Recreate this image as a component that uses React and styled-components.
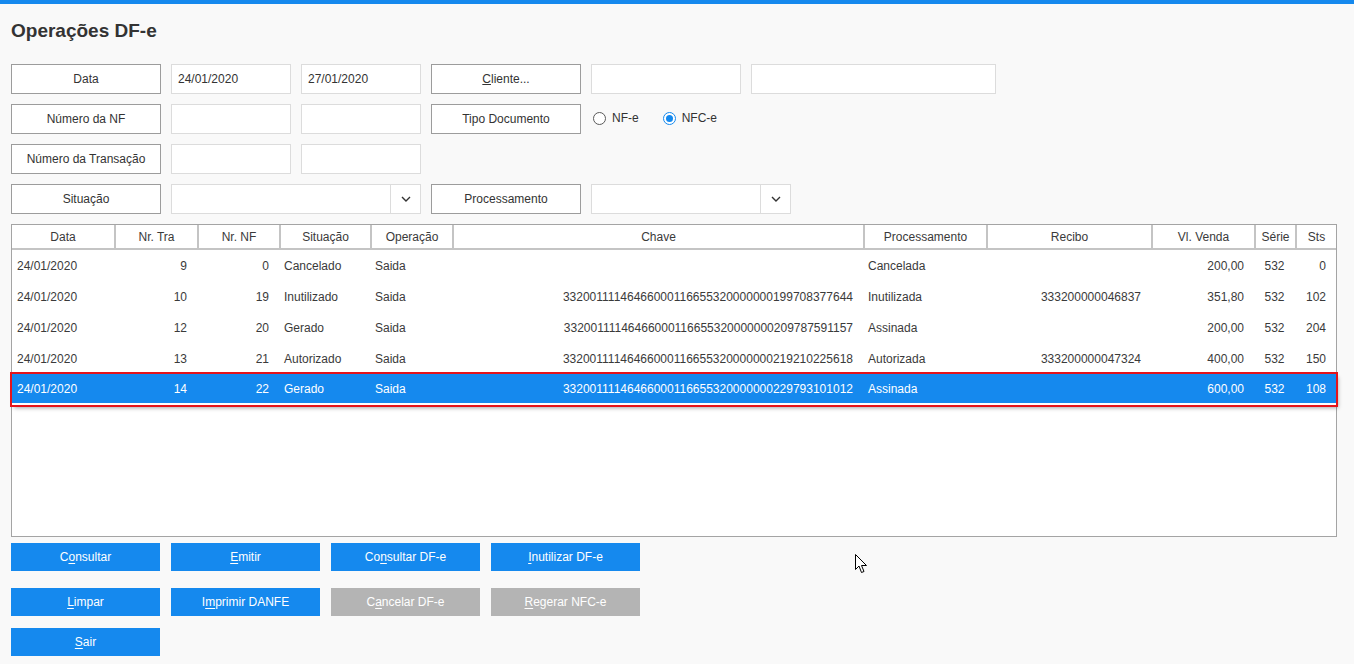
import styled, { createGlobalStyle } from "styled-components";

const GlobalStyle = createGlobalStyle`
  html, body {
    margin: 0;
    padding: 0;
    background: #f9f9f9;
  }
  body {
    font-family: "Liberation Sans", Arial, sans-serif;
    font-size: 12px;
    color: #3a3a3a;
  }
  * { box-sizing: border-box; }
`;

const BLUE = "#1589ee";

// widths of the body columns; the header separators sit 2px to the right
const columns = [
  { key: "data", title: "Data", width: 102, align: "left" },
  { key: "tra", title: "Nr. Tra", width: 83, align: "right" },
  { key: "nf", title: "Nr. NF", width: 82, align: "right" },
  { key: "sit", title: "Situação", width: 91, align: "left" },
  { key: "op", title: "Operação", width: 82, align: "left" },
  { key: "chave", title: "Chave", width: 411, align: "right" },
  { key: "proc", title: "Processamento", width: 123, align: "left" },
  { key: "recibo", title: "Recibo", width: 165, align: "right" },
  { key: "valor", title: "Vl. Venda", width: 103, align: "right" },
  { key: "serie", title: "Série", width: 41, align: "center" },
  { key: "sts", title: "Sts", width: 41, align: "right" },
];

const rows = [
  { data: "24/01/2020", tra: "9", nf: "0", sit: "Cancelado", op: "Saida", chave: "", proc: "Cancelada", recibo: "", valor: "200,00", serie: "532", sts: "0" },
  { data: "24/01/2020", tra: "10", nf: "19", sit: "Inutilizado", op: "Saida", chave: "33200111146466000116655320000000199708377644", proc: "Inutilizada", recibo: "333200000046837", valor: "351,80", serie: "532", sts: "102" },
  { data: "24/01/2020", tra: "12", nf: "20", sit: "Gerado", op: "Saida", chave: "33200111146466000116655320000000209787591157", proc: "Assinada", recibo: "", valor: "200,00", serie: "532", sts: "204" },
  { data: "24/01/2020", tra: "13", nf: "21", sit: "Autorizado", op: "Saida", chave: "33200111146466000116655320000000219210225618", proc: "Autorizada", recibo: "333200000047324", valor: "400,00", serie: "532", sts: "150" },
  { data: "24/01/2020", tra: "14", nf: "22", sit: "Gerado", op: "Saida", chave: "33200111146466000116655320000000229793101012", proc: "Assinada", recibo: "", valor: "600,00", serie: "532", sts: "108", selected: true },
];

const bodyTemplate = columns.map((c) => `${c.width}px`).join(" ");
const headTemplate = columns
  .map((c, i) => {
    if (i === 0) return `${c.width + 2}px`;
    if (i === columns.length - 1) return `${c.width - 2}px`;
    return `${c.width}px`;
  })
  .join(" ");

const Page = styled.div`
  position: relative;
  width: 1354px;
  height: 664px;
  overflow: hidden;
`;

const TopBar = styled.div`
  height: 4px;
  background: ${BLUE};
`;

const Content = styled.div`
  padding: 0 11px;
`;

const Title = styled.h1`
  margin: 15px 0 21px;
  font-size: 19px;
  line-height: 24px;
  font-weight: bold;
  color: #333;
`;

const Form = styled.div`
  display: flex;
  flex-direction: column;
  gap: 10px;
`;

const FormRow = styled.div`
  display: flex;
  gap: 10px;
  height: 30px;
`;

const LabelBox = styled.div`
  width: 150px;
  height: 30px;
  border: 1px solid #9c9c9c;
  background: #fff;
  display: flex;
  align-items: center;
  justify-content: center;
  color: #333;
`;

const Input = styled.div`
  width: ${(p) => p.$w || 120}px;
  height: 30px;
  border: 1px solid #dcdcdc;
  background: #fff;
  display: flex;
  align-items: center;
  padding-left: 6px;
  color: #333;
`;

const Select = styled.div`
  width: ${(p) => p.$w}px;
  height: 30px;
  border: 1px solid #dcdcdc;
  background: #fff;
  display: flex;
  justify-content: flex-end;
`;

const SelectArrow = styled.div`
  width: 30px;
  border-left: 1px solid #dcdcdc;
  display: flex;
  align-items: center;
  justify-content: center;
`;

const RadioGroup = styled.div`
  display: flex;
  align-items: center;
  gap: 24px;
  padding-left: 2px;
  height: 28px;
`;

const RadioItem = styled.div`
  display: flex;
  align-items: center;
  gap: 6px;
  color: #333;
`;

const RadioCircle = styled.span`
  flex: none;
  width: 13px;
  height: 13px;
  border-radius: 50%;
  border: 1px solid ${(p) => (p.$checked ? BLUE : "#5a5a5a")};
  background: #fff;
  display: flex;
  align-items: center;
  justify-content: center;

  &::after {
    content: "";
    width: 7px;
    height: 7px;
    border-radius: 50%;
    background: ${(p) => (p.$checked ? BLUE : "transparent")};
  }
`;

const Table = styled.div`
  margin-top: 10px;
  width: 1326px;
  height: 313px;
  border: 1px solid #a4a4a4;
  background: #fff;
`;

const HeaderRow = styled.div`
  display: grid;
  grid-template-columns: ${headTemplate};
  height: 25px;
  border-bottom: 2px solid #c4c4c4;
`;

const HeaderCell = styled.div`
  display: flex;
  align-items: center;
  justify-content: center;
  border-right: 2px solid #c4c4c4;
  color: #3a3a3a;

  &:last-child {
    border-right: none;
  }
`;

const BodyRow = styled.div`
  position: relative;
  display: grid;
  grid-template-columns: ${bodyTemplate};
  height: 31px;
  background: ${(p) => (p.$selected ? BLUE : "transparent")};
  color: ${(p) => (p.$selected ? "#fff" : "#3a3a3a")};
  box-shadow: ${(p) =>
    p.$selected ? "0 0 0 2px #e4141b, 2px 3px 4px rgba(0,0,0,0.35)" : "none"};
  border-bottom: ${(p) => (p.$selected ? "2px solid #fff" : "none")};
`;

const Cell = styled.div`
  display: flex;
  align-items: center;
  justify-content: ${(p) =>
    p.$align === "right" ? "flex-end" : p.$align === "center" ? "center" : "flex-start"};
  padding: ${(p) => (p.$align === "right" ? "0 10px 0 0" : p.$align === "center" ? "0" : "0 0 0 5px")};
  white-space: nowrap;
`;

const ButtonGrid = styled.div`
  display: grid;
  grid-template-columns: repeat(4, 149px);
  column-gap: 11px;
  margin-top: 6px;
`;

const ActionButton = styled.div`
  height: 28px;
  display: flex;
  align-items: center;
  justify-content: center;
  background: ${(p) => (p.$disabled ? "#b4b4b4" : BLUE)};
  color: #fff;
  margin-top: ${(p) => p.$top || 0}px;

  u {
    text-decoration: underline;
    text-underline-offset: 2px;
  }
`;

const Cursor = styled.svg`
  position: absolute;
  left: 855px;
  top: 554px;
`;

const Chevron = () => (
  <svg width="10" height="6" viewBox="0 0 10 6">
    <path d="M1 1 L5 5 L9 1" fill="none" stroke="#333" strokeWidth="1.4" />
  </svg>
);

const Mn = ({ before = "", letter, after = "" }) => (
  <span>
    {before}
    <u>{letter}</u>
    {after}
  </span>
);

const App = () => {
  return (
    <Page>
      <GlobalStyle />
      <TopBar />
      <Content>
        <Title>Operações DF-e</Title>
        <Form>
          <FormRow>
            <LabelBox>Data</LabelBox>
            <Input>24/01/2020</Input>
            <Input>27/01/2020</Input>
            <LabelBox>
              <Mn letter="C" after="liente..." />
            </LabelBox>
            <Input $w={150} />
            <Input $w={245} />
          </FormRow>
          <FormRow>
            <LabelBox>Número da NF</LabelBox>
            <Input />
            <Input />
            <LabelBox>Tipo Documento</LabelBox>
            <RadioGroup>
              <RadioItem>
                <RadioCircle />
                NF-e
              </RadioItem>
              <RadioItem>
                <RadioCircle $checked />
                NFC-e
              </RadioItem>
            </RadioGroup>
          </FormRow>
          <FormRow>
            <LabelBox>Número da Transação</LabelBox>
            <Input />
            <Input />
          </FormRow>
          <FormRow>
            <LabelBox>Situação</LabelBox>
            <Select $w={250}>
              <SelectArrow>
                <Chevron />
              </SelectArrow>
            </Select>
            <LabelBox>Processamento</LabelBox>
            <Select $w={200}>
              <SelectArrow>
                <Chevron />
              </SelectArrow>
            </Select>
          </FormRow>
        </Form>

        <Table>
          <HeaderRow>
            {columns.map((c) => (
              <HeaderCell key={c.key}>{c.title}</HeaderCell>
            ))}
          </HeaderRow>
          {rows.map((r, i) => (
            <BodyRow key={i} $selected={r.selected}>
              {columns.map((c) => (
                <Cell key={c.key} $align={c.align}>
                  {r[c.key]}
                </Cell>
              ))}
            </BodyRow>
          ))}
        </Table>

        <ButtonGrid>
          <ActionButton><Mn before="C" letter="o" after="nsultar" /></ActionButton>
          <ActionButton><Mn letter="E" after="mitir" /></ActionButton>
          <ActionButton><Mn before="Co" letter="n" after="sultar DF-e" /></ActionButton>
          <ActionButton><Mn letter="I" after="nutilizar DF-e" /></ActionButton>
          <ActionButton $top={17}><Mn letter="L" after="impar" /></ActionButton>
          <ActionButton $top={17}><Mn before="I" letter="m" after="primir DANFE" /></ActionButton>
          <ActionButton $top={17} $disabled><Mn before="C" letter="a" after="ncelar DF-e" /></ActionButton>
          <ActionButton $top={17} $disabled><Mn letter="R" after="egerar NFC-e" /></ActionButton>
          <ActionButton $top={12}><Mn letter="S" after="air" /></ActionButton>
        </ButtonGrid>
      </Content>

      <Cursor width="13" height="20" viewBox="0 0 13 20">
        <path
          d="M0.5 0.5 L0.5 15.5 L4 12 L6.5 18.5 L9 17.5 L6.5 11.5 L11.5 11.5 Z"
          fill="#fff"
          stroke="#000"
          strokeWidth="1"
        />
      </Cursor>
    </Page>
  );
};

export default App;
